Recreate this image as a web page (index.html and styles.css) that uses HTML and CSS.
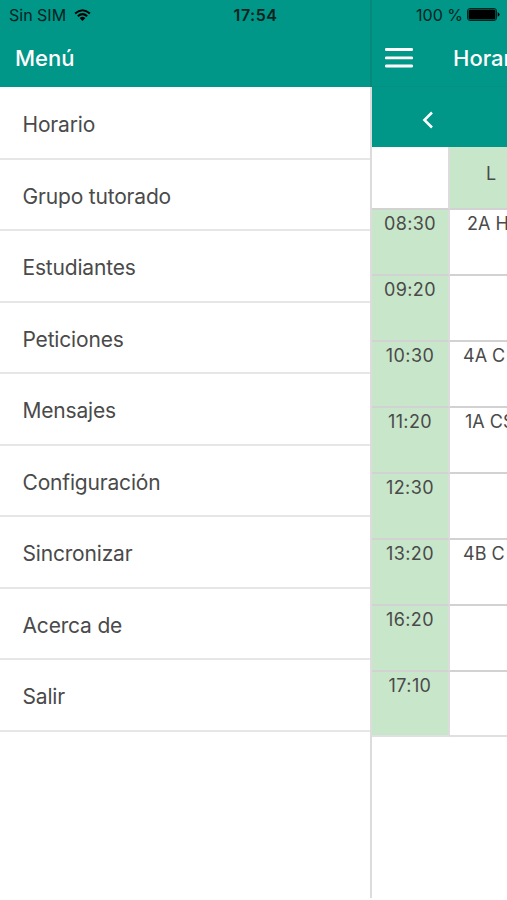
FILE: index.html
```
<!DOCTYPE html>
<html lang="es">

<head>
    <title>Horario</title>
    <meta charset="UTF-8">
    <link rel="stylesheet" href="styles.css">
</head>

<body>
    <div class="screen">
        <nav class="menu">
            <header class="menu-title">Menú</header>
            <ul class="menu-list">
                <li>Horario</li>
                <li>Grupo tutorado</li>
                <li>Estudiantes</li>
                <li>Peticiones</li>
                <li>Mensajes</li>
                <li>Configuración</li>
                <li>Sincronizar</li>
                <li>Acerca de</li>
                <li>Salir</li>
            </ul>
        </nav>
        <main class="page">
            <header class="toolbar">
                <svg class="burger" viewBox="0 0 28 20" width="28" height="20">
                    <path d="M1.2 1.5h25.6M1.2 9.8h25.6M1.2 18h25.6" />
                </svg>
                <h1>Horario</h1>
            </header>
            <div class="week-nav">
                <svg class="prev" viewBox="0 0 12 18" width="12" height="18">
                    <path d="M10 1.5L2.4 9L10 16.5" />
                </svg>
            </div>
            <div class="timetable">
                <div class="corner"></div>
                <div class="day">L</div>
                <div class="hour">08:30</div>
                <div class="lesson"><span class="text-short">2A H</span></div>
                <div class="hour">09:20</div>
                <div class="lesson"></div>
                <div class="hour">10:30</div>
                <div class="lesson"><span>4A C</span></div>
                <div class="hour">11:20</div>
                <div class="lesson"><span class="text-mid">1A CS</span></div>
                <div class="hour">12:30</div>
                <div class="lesson"></div>
                <div class="hour">13:20</div>
                <div class="lesson"><span>4B C</span></div>
                <div class="hour">16:20</div>
                <div class="lesson"></div>
                <div class="hour">17:10</div>
                <div class="lesson"></div>
            </div>
        </main>
        <!-- barra de estado, encima del menú y de la página -->
        <div class="status">
            <div class="carrier">
                <span>Sin SIM</span>
                <svg viewBox="0 0 17 12" width="17" height="12">
                    <path class="wave" d="M1.1 4.5Q8.5 -2 15.9 4.5M3.8 7.2Q8.5 3.1 13.2 7.2" />
                    <path d="M5.6 9Q8.5 6.6 11.4 9L8.5 12z" />
                </svg>
            </div>
            <div class="clock">17:54</div>
            <div class="battery">
                <span>100 %</span>
                <svg viewBox="0 0 33 13" width="33" height="13">
                    <rect class="case" x=".5" y=".5" width="29" height="12" rx="2.5" />
                    <rect x="1.5" y="1.5" width="27" height="10" rx="1.5" />
                    <path d="M30.7 4.2Q32.6 5 32.6 6.5Q32.6 8 30.7 8.8z" />
                </svg>
            </div>
        </div>
    </div>
</body>

</html>
```
FILE: styles.css
```
body {
    margin: 0;
    background: #fff;
    color: #4a4a4a;
    font-family: Inter, "Liberation Sans", sans-serif;
}

.screen {
    position: relative;
    display: flex;
    height: 900px;
    overflow: hidden;
}

.menu {
    flex: none;
    box-sizing: border-box;
    width: 372px;
    height: 898px;
    border-right: 2px solid #dcdcdc;
}

.menu-title {
    box-sizing: border-box;
    height: 87px;
    margin-right: -2px;
    padding: 43px 0 0 15px;
    background: #009688;
    border-right: 2px solid #078a7e;
    color: #fff;
    font-size: 22px;
    font-weight: 450;
    line-height: 30px;
}

.menu-list {
    margin: 0;
    padding: 1px 0 0;
    list-style: none;
}

.menu-list li {
    box-sizing: border-box;
    height: 71.5px;
    padding-left: 22.5px;
    border-bottom: 2px solid #e6e6e6;
    font-size: 21px;
    letter-spacing: -.18px;
    line-height: 73px;
}

.page {
    flex: 1;
    min-width: 0;
    overflow: hidden;
}

.toolbar {
    display: flex;
    box-sizing: border-box;
    height: 87px;
    padding: 43px 0 0 13px;
    background: #009688;
    border-bottom: 1px solid #078f82;
    color: #fff;
}

.toolbar h1 {
    margin: 0 0 0 40px;
    font-size: 22px;
    font-weight: 450;
    line-height: 30px;
}

.burger {
    flex: none;
    margin-top: 5px;
    fill: none;
    stroke: #fff;
    stroke-width: 2.8;
    stroke-linecap: round;
}

.week-nav {
    box-sizing: border-box;
    height: 60px;
    padding: 24px 0 0 50px;
    background: #009688;
}

.prev {
    display: block;
    fill: none;
    stroke: #fff;
    stroke-width: 2.5;
}

.timetable {
    display: grid;
    grid-template-columns: 78px 82px;
    grid-template-rows: 63px repeat(7, 66px) 65px;
    font-size: 18px;
    line-height: 22px;
}

.corner,
.day,
.hour,
.lesson {
    box-sizing: border-box;
    border-bottom: 2px solid #d2d2d2;
}

.corner,
.hour {
    border-right: 2px solid #dcdcdc;
}

.day,
.hour {
    background: #c8e6c9;
    text-align: center;
}

.day {
    padding-top: 16px;
}

.hour {
    padding-top: 3px;
    letter-spacing: .4px;
}

.lesson {
    padding: 3px 0 0 13px;
    white-space: nowrap;
}

.hour:nth-last-child(2),
.lesson:last-child {
    border-bottom-color: #e0e0e0;
}

.text-short {
    padding-left: 4px;
}

.text-mid {
    padding-left: 2px;
}

.status {
    position: absolute;
    top: 0;
    left: 0;
    display: grid;
    grid-template-columns: 1fr auto 1fr;
    align-items: center;
    box-sizing: border-box;
    width: 507px;
    height: 29px;
    padding: 0 7px 0 9px;
    color: #06241f;
    font-size: 16px;
}

.status svg {
    fill: #000;
}

.status .wave {
    fill: none;
    stroke: #000;
    stroke-width: 2;
}

.status .case {
    fill: none;
    stroke: #06241f;
}

.carrier,
.battery {
    display: flex;
    align-items: center;
    gap: 8px;
}

.battery {
    justify-content: flex-end;
    gap: 4px;
}

.clock {
    padding-left: 2px;
    font-weight: 600;
    letter-spacing: .5px;
}
```
